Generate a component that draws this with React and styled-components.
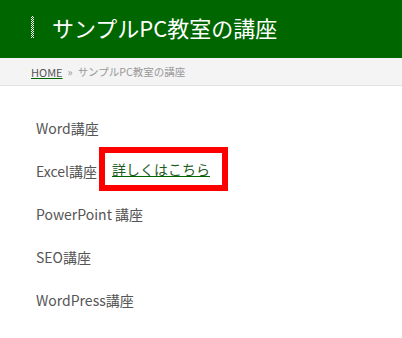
import React from 'react'
import styled, { createGlobalStyle } from 'styled-components'

const GlobalStyle = createGlobalStyle`
    body {
        margin: 0;
        background: #fff;
        font-family: "Noto Sans CJK JP", "Noto Sans", sans-serif;
    }
`

const Header = styled.header`
    height: 58px;
    box-sizing: border-box;
    padding: 0 0 4px 31px;
    background-color: #006600;
    display: flex;
    align-items: center;
    gap: 18px;
`

const DottedBar = styled.span`
    width: 3px;
    height: 22px;
    background: repeating-conic-gradient(#ffffff 0 25%, #006600 0 50%) 0 0 / 2px 2px;
`

const Title = styled.h1`
    margin: 0;
    color: #fff;
    font-size: 22px;
    font-weight: normal;
    line-height: 1;
`

const Breadcrumb = styled.nav`
    height: 27px;
    background-color: #f4f4f4;
    border-bottom: 1px solid #e2e2e2;
    display: flex;
    align-items: center;
    padding-left: 31px;
    font-size: 10.5px;
    color: #999;
    gap: 5px;
`

const HomeLink = styled.a`
    color: #555;
    font-size: 11px;
    text-decoration: underline;
    text-decoration-color: #006600;
`

const List = styled.ul`
    list-style: none;
    margin: 20px 0 0;
    padding: 0 0 0 36px;
`

const Item = styled.li`
    height: 43px;
    display: flex;
    align-items: center;
    font-size: 14px;
    color: #555;
    gap: 2px;
`

const Highlight = styled.span`
    border: 6px solid #ff0000;
    padding: 3px 12px 3px 7px;
    display: inline-flex;
    align-items: center;
    height: 26px;
    margin-top: -4px;
`

const DetailLink = styled.a`
    color: #1f5d1f;
    text-decoration: underline;
    text-decoration-color: #006600;
    font-size: 14px;
`

const courses = ['Word講座', 'Excel講座', 'PowerPoint 講座', 'SEO講座', 'WordPress講座']

const App = () => (
    <>
        <GlobalStyle />
        <Header>
            <DottedBar />
            <Title>サンプルPC教室の講座</Title>
        </Header>
        <Breadcrumb>
            <HomeLink href="#">HOME</HomeLink>
            <span>»</span>
            <span>サンプルPC教室の講座</span>
        </Breadcrumb>
        <List>
            {courses.map(name => (
                <Item key={name}>
                    {name}
                    {name === 'Excel講座' &&
                        <Highlight>
                            <DetailLink href="#">詳しくはこちら</DetailLink>
                        </Highlight>
                    }
                </Item>
            ))}
        </List>
    </>
)

export default App
